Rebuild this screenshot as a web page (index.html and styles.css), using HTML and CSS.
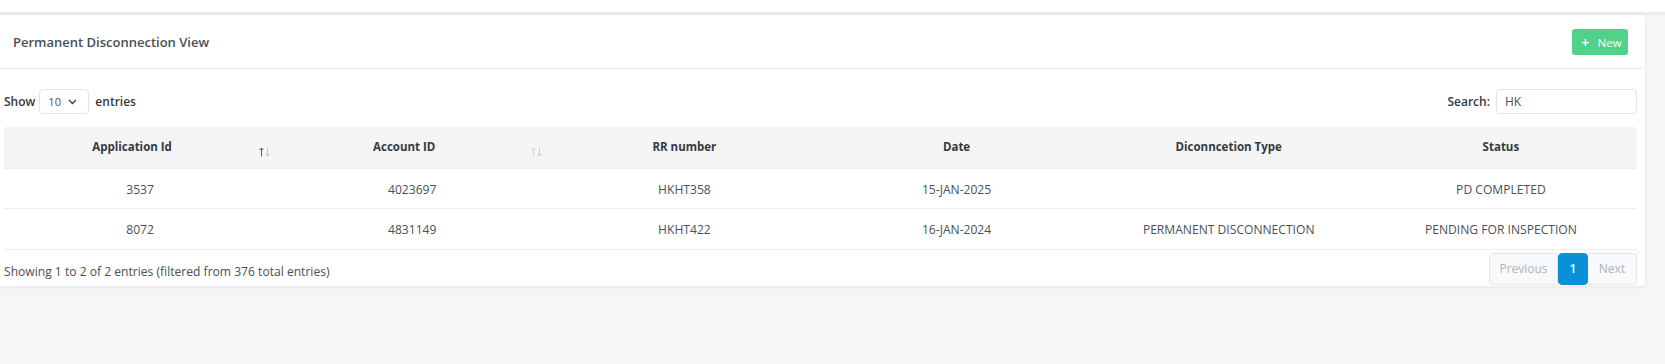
FILE: index.html
```html
<!DOCTYPE html>
<html lang="en">
<head>
<meta charset="utf-8">
<title>Permanent Disconnection View</title>
<link rel="stylesheet" href="styles.css">
</head>
<body>
<div class="topbar"></div>
<div class="card">
  <div class="card-header">
    <h4 class="card-title">Permanent Disconnection View</h4>
    <button class="btn-new"><span class="plus">+</span><span>New</span></button>
  </div>
  <div class="card-body">
    <div class="controls">
      <label class="length">Show
        <span class="select"><span class="select-val">10</span>
          <svg class="chev" width="9" height="6" viewBox="0 0 9 6"><path d="M1 1 L4.5 4.5 L8 1" fill="none" stroke="#343a40" stroke-width="1.3"/></svg>
        </span>
        entries</label>
      <label class="search">Search:
        <span class="input">HK</span>
      </label>
    </div>
    <table class="dt">
      <colgroup><col><col><col><col><col><col></colgroup>
      <thead>
        <tr>
          <th class="sortable">Application Id
            <svg class="sort" width="11" height="10" viewBox="0 0 11 10"><path d="M2.5 9.5V1 M0.5 3 L2.5 1 L4.5 3" fill="none" stroke="#55557a" stroke-width="1"/><path d="M8.5 0.5V9 M6.5 7 L8.5 9 L10.5 7" fill="none" stroke="#c4c4cc" stroke-width="1"/></svg>
          </th>
          <th class="sortable">Account ID
            <svg class="sort" width="11" height="10" viewBox="0 0 11 10"><path d="M2.5 9.5V1 M0.5 3 L2.5 1 L4.5 3" fill="none" stroke="#dccfd6" stroke-width="1"/><path d="M8.5 0.5V9 M6.5 7 L8.5 9 L10.5 7" fill="none" stroke="#c9c9d2" stroke-width="1"/></svg>
          </th>
          <th>RR number</th>
          <th>Date</th>
          <th>Diconncetion Type</th>
          <th>Status</th>
        </tr>
      </thead>
      <tbody>
        <tr><td>3537</td><td>4023697</td><td>HKHT358</td><td>15-JAN-2025</td><td></td><td>PD COMPLETED</td></tr>
        <tr><td>8072</td><td>4831149</td><td>HKHT422</td><td>16-JAN-2024</td><td>PERMANENT DISCONNECTION</td><td>PENDING FOR INSPECTION</td></tr>
      </tbody>
    </table>
    <div class="table-footer">
      <div class="info">Showing 1 to 2 of 2 entries (filtered from 376 total entries)</div>
      <ul class="pagination">
        <li class="page disabled first">Previous</li>
        <li class="page active">1</li>
        <li class="page disabled last">Next</li>
      </ul>
    </div>
  </div>
</div>
</body>
</html>
```
FILE: styles.css
```css
* { box-sizing: border-box; }
html, body { margin: 0; padding: 0; }
body {
  background: #f5f6f8;
  font-family: "Open Sans", "Noto Sans", sans-serif;
  color: #495057;
  width: 1665px;
  height: 364px;
  overflow: hidden;
}
.topbar {
  height: 15px;
  background: #fff;
  border-bottom: 3px solid #e9ebef;
}
.card {
  width: 1645px;
  background: #fff;
  border-radius: 0 4px 4px 0;
  box-shadow: 0 1px 4px rgba(20, 30, 50, 0.07);
}
.card-header {
  height: 54px;
  display: flex;
  align-items: center;
  justify-content: space-between;
  padding: 0 17px 0 13px;
  border-bottom: 1px solid #eceef1;
}
.card-title {
  margin: 0;
  font-size: 13px;
  font-weight: 600;
  color: #495057;
}
.btn-new {
  display: flex;
  align-items: center;
  gap: 8px;
  height: 26px;
  width: 56px;
  padding: 0 0 0 9px;
  border: 0;
  border-radius: 3px;
  background: #50d28b;
  color: #fff;
  font-family: "Open Sans", sans-serif;
  font-size: 11.5px;
  margin-top: 1px;
}
.btn-new .plus { font-size: 15px; line-height: 1; font-weight: 600; }
.card-body { padding: 0 8px 1px 4px; }
.controls {
  display: flex;
  justify-content: space-between;
  align-items: center;
  padding-top: 20px;
  height: 45px;
}
.length, .search {
  display: flex;
  align-items: center;
  font-size: 12px;
  font-weight: 600;
  color: #343a40;
}
.select {
  display: flex;
  align-items: center;
  width: 50px;
  height: 25px;
  margin: 0 6px 0 4px;
  padding-left: 8px;
  border: 1px solid #e1e4e8;
  border-radius: 4px;
  font-weight: 400;
  font-size: 11px;
  color: #495057;
}
.select-val { width: 20px; }
.input {
  display: flex;
  align-items: center;
  width: 141px;
  height: 25px;
  margin-left: 6px;
  padding-left: 8px;
  border: 1px solid #e1e4e8;
  border-radius: 4px;
  font-weight: 400;
  color: #495057;
}
.dt {
  width: 1633px;
  margin-top: 13px;
  table-layout: fixed;
  border-collapse: collapse;
}
.dt th {
  position: relative;
  height: 41px;
  padding: 0 0 1px;
  background: #f5f5f5;
  border-bottom: 1px solid #ebedf0;
  font-size: 11.5px;
  font-weight: 700;
  color: #343a40;
  text-align: center;
}
.dt th.sortable { padding-right: 16px; }
.dt .sort {
  position: absolute;
  right: 6px;
  top: 20px;
}
.dt td {
  height: 40px;
  padding: 2px 0 0;
  border-bottom: 1px solid #ebedf0;
  font-size: 12.1px;
  text-align: center;
  color: #495057;
}
.dt tbody tr:last-child td { height: 41px; }
.table-footer {
  display: flex;
  justify-content: space-between;
  align-items: flex-start;
  padding-top: 3px;
}
.info {
  padding-top: 10px;
  font-size: 12.1px;
  line-height: 18px;
}
.pagination {
  display: flex;
  margin: 0;
  padding: 0;
  list-style: none;
}
.page {
  height: 32px;
  display: flex;
  align-items: center;
  justify-content: center;
  font-size: 12px;
  border: 1px solid #e1e4e8;
  background: #f8f9fa;
  color: #adb3ba;
}
.page.first { width: 69px; border-radius: 4px 0 0 4px; }
.page.last { width: 49px; border-radius: 0 4px 4px 0; border-left: 0; }
.page.active {
  width: 30px;
  background: #0890d9;
  border-color: #0890d9;
  color: #fff;
  border-radius: 4px;
  font-weight: 600;
}
```
